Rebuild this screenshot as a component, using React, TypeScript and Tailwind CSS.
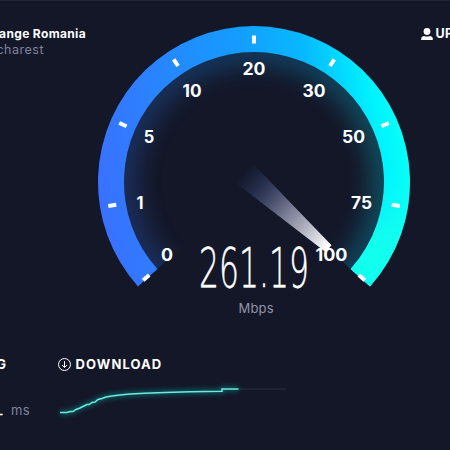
const TICKS = [-131.3, -99, -66, -33, 0, 33, 66, 99, 131.3];

const LABELS = [
  { text: "0", x: 69, y: 235, width: 12 },
  { text: "1", x: 42, y: 182.5, width: 7 },
  { text: "5", x: 51, y: 116.5, width: 10.5 },
  { text: "10", x: 94, y: 70.5, width: 19 },
  { text: "20", x: 156, y: 48.5, width: 23 },
  { text: "30", x: 216, y: 70.5, width: 23 },
  { text: "50", x: 255.5, y: 116.5, width: 23 },
  { text: "75", x: 263.5, y: 182.5, width: 21 },
  { text: "100", x: 233.5, y: 235, width: 32 },
];

const Gauge = () => {
  return (
    <svg
      width="312"
      height="300"
      viewBox="0 0 312 300"
      className="block overflow-visible"
    >
      <defs>
        <linearGradient id="ring" gradientUnits="userSpaceOnUse" x1="0" y1="190" x2="312" y2="140">
          <stop offset="0" stopColor="#3a70ff" />
          <stop offset="0.25" stopColor="#2984ff" />
          <stop offset="0.5" stopColor="#169aff" />
          <stop offset="0.72" stopColor="#08b8ff" />
          <stop offset="0.92" stopColor="#00f4ff" />
          <stop offset="1" stopColor="#08fff6" />
        </linearGradient>
        <linearGradient id="ringEnd" gradientUnits="userSpaceOnUse" x1="0" y1="150" x2="0" y2="270">
          <stop offset="0" stopColor="#12fff0" stopOpacity="0" />
          <stop offset="0.6" stopColor="#12fff0" />
        </linearGradient>
        <linearGradient id="needle" gradientUnits="userSpaceOnUse" x1="0" y1="-14" x2="0" y2="98">
          <stop offset="0" stopColor="#2c3a63" stopOpacity="0" />
          <stop offset="0.2" stopColor="#343f68" stopOpacity="0.6" />
          <stop offset="0.55" stopColor="#9295ac" stopOpacity="0.85" />
          <stop offset="1" stopColor="#ffffff" />
        </linearGradient>
        <filter id="soft" x="-20%" y="-20%" width="140%" height="140%">
          <feGaussianBlur stdDeviation="13" />
        </filter>
        <clipPath id="dial">
          <path d="M156 162 L59.4 249 A130 130 0 1 1 252.6 249 Z" />
        </clipPath>
      </defs>

      <g clipPath="url(#dial)">
        <circle
          cx="156"
          cy="162"
          r="132"
          fill="none"
          stroke="url(#ring)"
          strokeWidth="26"
          opacity="0.3"
          filter="url(#soft)"
        />
      </g>

      <path
        d="M40 266.4 A156 156 0 1 1 272 266.4 L252.6 249 A130 130 0 1 0 59.4 249 Z"
        fill="url(#ring)"
      />
      {/* cyan tail on the fast side */}
      <path
        d="M311.5 150 A156 156 0 0 1 272 266.4 L252.6 249 A130 130 0 0 0 285.4 150 Z"
        fill="url(#ringEnd)"
      />
      {TICKS.map((angle) => (
        <rect
          key={angle}
          x="154"
          y="15.5"
          width="4"
          height="8"
          fill="#fff"
          transform={`rotate(${angle} 156 163)`}
        />
      ))}

      {LABELS.map(({ text, x, y, width }) => (
        <text
          key={text}
          x={x}
          y={y + 6.2}
          textAnchor="middle"
          textLength={width}
          lengthAdjust="spacingAndGlyphs"
          className="fill-white text-[17px] font-bold"
        >
          {text}
        </text>
      ))}

      <path
        d="M-13 -14 L13 -14 L4.5 100 L-4.5 100 Z"
        fill="url(#needle)"
        transform="translate(156 162) rotate(-48.2)"
      />

      <text
        x="156"
        y="267"
        textAnchor="middle"
        textLength="110"
        lengthAdjust="spacingAndGlyphs"
        stroke="#fff"
        strokeWidth="0.5"
        className="fill-white font-['DejaVu_Sans'] text-[55px] font-extralight"
      >
        261.19
      </text>
      <text
        x="158"
        y="293"
        textAnchor="middle"
        textLength="35"
        className="fill-[#9193a8] text-[13px]"
      >
        Mbps
      </text>
    </svg>
  );
};

const SpeedChart = () => {
  const line =
    "M60 24.5 H67 L70 23.5 H73 L76 21.5 L80 20 L84 18 L87 16.5 H89 L92 14.5 L95 14 L98 11.5 L102 10.5 L106 9 L112 8 L120 7 L130 6 L145 5.2 L165 4.4 L190 3.8 L222 3.2 V1 H238.5";
  return (
    <svg width="300" height="36" className="block overflow-visible" fill="none">
      <defs>
        <filter id="glow" x="-10%" y="-60%" width="120%" height="220%">
          <feGaussianBlur stdDeviation="2.5" />
        </filter>
      </defs>
      <path d="M238 1 H286" stroke="#25293b" strokeWidth="1.5" />
      <path d={line} stroke="#10b8a8" strokeWidth="4" opacity="0.5" filter="url(#glow)" />
      <path d={line} stroke="#6ceae0" strokeWidth="1.5" />
    </svg>
  );
};

export default function App() {
  return (
    <div className="flex h-[450px] w-[450px] flex-col overflow-hidden border-t border-[#222636] bg-[#141728] font-[Inter,sans-serif] text-white">
      <div className="grid grid-cols-[98px_312px_40px] pt-[19px]">
        <div className="flex flex-col whitespace-nowrap pt-[6px]">
          <div className="flex w-[86px] justify-end text-[12px] leading-4 font-bold tracking-[0.35px]">
            Orange Romania
          </div>
          <div className="flex w-[44px] justify-end text-[12.5px] leading-4 tracking-[0.5px] text-[#80839f]">
            Bucharest
          </div>
        </div>
        <Gauge />
        <div className="flex h-7 items-center gap-[3px] pl-[10.5px] text-[12.5px] font-bold tracking-[0.4px]">
          <svg width="12" height="12" viewBox="0 0 12 12" fill="#fff" className="shrink-0">
            <circle cx="6" cy="3.5" r="3.4" />
            <path d="M0.2 12 V10.2 Q0.4 8.4 3 7.9 Q6 8.9 9 7.9 Q11.6 8.4 11.8 10.2 V12 Z" />
          </svg>
          UPC
        </div>
      </div>

      <div className="mt-[37px] flex h-4 items-center text-[13px] font-bold">
        <div className="flex w-[6px] shrink-0 justify-end">PING</div>
        <div className="ml-[51.5px] flex items-center gap-[5px] tracking-[1.1px]">
          <svg width="13" height="13" viewBox="0 0 13 13" fill="none" stroke="#fff" className="-mt-[2px]">
            <circle cx="6.5" cy="6.5" r="6" />
            <path d="M6.5 3.2 V9.3 M4 7 L6.5 9.5 L9 7" />
          </svg>
          DOWNLOAD
        </div>
      </div>

      <div className="mt-[15px] flex">
        <div className="flex w-[60px] shrink-0 items-baseline gap-[6px] pt-[1px]">
          <div className="flex w-[5px] shrink-0 justify-end font-['DejaVu_Sans'] text-[24px] leading-9 font-extralight [-webkit-text-stroke:0.5px_white]">
            11
          </div>
          <div className="text-[13px] tracking-[0.3px] text-[#80839f]">ms</div>
        </div>
        <div className="-ml-[60px]">
          <SpeedChart />
        </div>
      </div>
    </div>
  );
}
